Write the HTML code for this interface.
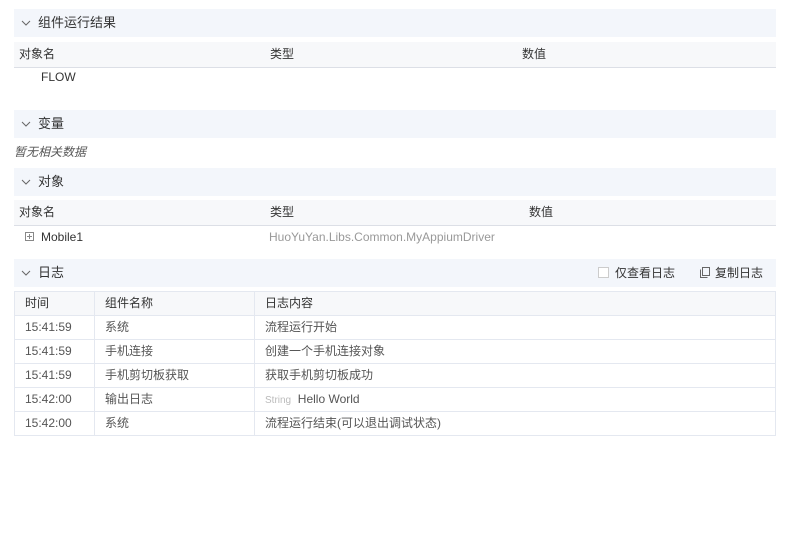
<!DOCTYPE html>
<html><head><meta charset="utf-8"><style>
body{margin:0;background:#fff;font-family:"Liberation Sans","Noto Sans CJK SC",sans-serif;font-size:12px;color:#333;width:786px;height:559px;overflow:hidden;position:relative}
.a{position:absolute}
.hd{position:absolute;left:14px;width:762px;height:28px;background:#f3f6fb;font-size:13px;color:#333;line-height:28px}
.hd .t{position:absolute;left:24px}
.chev{position:absolute;left:7px;top:9px;width:10px;height:10px}
.th{position:absolute;left:14px;width:762px;height:25px;background:#f7f8fa;border-bottom:1px solid #dcdfe6;line-height:25px}
table{position:absolute;left:14px;top:291px;width:762px;border-collapse:collapse}
td{border:1px solid #e4e8f0;height:23px;padding:0 0 0 10px;line-height:23px;color:#555;overflow:hidden}
tr:first-child td{background:#f7f8fa;color:#333}
</style></head><body>
<div class="hd" style="top:9px"><svg class="chev" viewBox="0 0 10 10"><path d="M1 3l4 4 4-4" fill="none" stroke="#666" stroke-width="1"/></svg><span class="t">组件运行结果</span></div>
<div class="th" style="top:42px"><span class="a" style="left:5px">对象名</span><span class="a" style="left:256px">类型</span><span class="a" style="left:508px">数值</span></div>
<div class="a" style="left:41px;top:70px">FLOW</div>
<div class="hd" style="top:110px"><svg class="chev" viewBox="0 0 10 10"><path d="M1 3l4 4 4-4" fill="none" stroke="#666" stroke-width="1"/></svg><span class="t">变量</span></div>
<div class="a" style="left:14px;top:143px;font-style:italic;color:#555">暂无相关数据</div>
<div class="hd" style="top:168px"><svg class="chev" viewBox="0 0 10 10"><path d="M1 3l4 4 4-4" fill="none" stroke="#666" stroke-width="1"/></svg><span class="t">对象</span></div>
<div class="th" style="top:200px"><span class="a" style="left:5px">对象名</span><span class="a" style="left:256px">类型</span><span class="a" style="left:515px">数值</span></div>
<svg class="a" style="left:25px;top:232px" width="9" height="9" viewBox="0 0 9 9"><rect x=".5" y=".5" width="8" height="8" fill="none" stroke="#888"/><path d="M2 4.5h5M4.5 2v5" stroke="#888"/></svg>
<div class="a" style="left:41px;top:230px">Mobile1</div>
<div class="a" style="left:269px;top:230px;color:#999">HuoYuYan.Libs.Common.MyAppiumDriver</div>
<div class="hd" style="top:259px"><svg class="chev" viewBox="0 0 10 10"><path d="M1 3l4 4 4-4" fill="none" stroke="#666" stroke-width="1"/></svg><span class="t">日志</span>
<span class="a" style="left:584px;top:8px;width:11px;height:11px;border:1px solid #ccc;background:#fff;box-sizing:border-box"></span>
<span class="a" style="left:601px;font-size:12px">仅查看日志</span>
<svg class="a" style="left:686px;top:8px" width="10" height="11" viewBox="0 0 10 11"><rect x="2.5" y=".5" width="7" height="8" fill="none" stroke="#666"/><path d="M.5 2.5v8h7" fill="none" stroke="#666"/></svg>
<span class="a" style="left:701px;font-size:12px">复制日志</span></div>
<table>
<tr><td style="width:69px">时间</td><td style="width:149px">组件名称</td><td>日志内容</td></tr>
<tr><td>15:41:59</td><td>系统</td><td>流程运行开始</td></tr>
<tr><td>15:41:59</td><td>手机连接</td><td>创建一个手机连接对象</td></tr>
<tr><td>15:41:59</td><td>手机剪切板获取</td><td>获取手机剪切板成功</td></tr>
<tr><td>15:42:00</td><td>输出日志</td><td><span style="color:#bbb;font-size:10px;line-height:10px">String</span>&nbsp; Hello World</td></tr>
<tr><td>15:42:00</td><td>系统</td><td>流程运行结束(可以退出调试状态)</td></tr>
</table>
</body></html>
